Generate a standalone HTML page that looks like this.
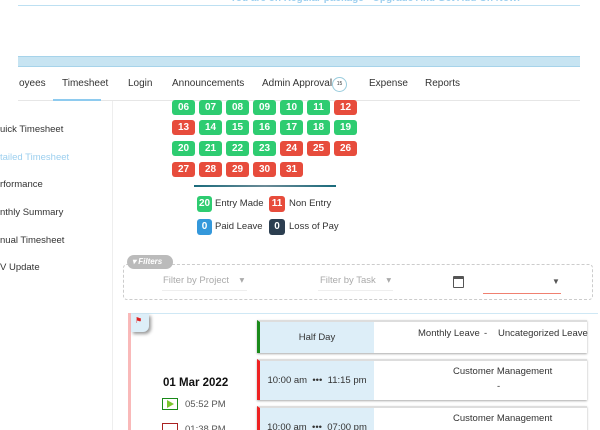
<!DOCTYPE html>
<html><head><style>
*{margin:0;padding:0;box-sizing:border-box}
html,body{width:600px;height:430px;overflow:hidden}
body{background:#fff;font-family:"Liberation Sans",sans-serif;position:relative;color:#333}
.a{position:absolute;white-space:nowrap}
.c{position:absolute;width:23px;height:15px;border-radius:3px;color:#fff;font-size:10px;font-weight:bold;text-align:center;line-height:15px}
.g{background:#2ecc71}.r{background:#e74c3c}
.tab{position:absolute;top:78px;font-size:10px;color:#333;white-space:nowrap}
.side{position:absolute;left:0;font-size:9.5px;color:#333}
.row{position:absolute;left:257px;width:330px;background:#fff;box-shadow:0 1px 2px #aaa;border-top:2px solid #ddd}
.row .bl{position:absolute;left:0;top:0;bottom:0;width:114px;background:#ddeef8;font-size:9.5px;text-align:center}
.t{position:absolute;font-size:9.5px;color:#333;white-space:nowrap}
</style></head><body>
<div class="a" style="left:230px;top:-7px;font-size:10px;font-weight:bold;color:#9ccfef">You are on Regular package - Upgrade And Get Add On Now!</div>
<div class="a" style="left:18px;top:5px;width:562px;height:1px;background:#bde0f2"></div>
<div class="a" style="left:18px;top:56px;width:562px;height:11px;background:#c7e4f2;border-top:1px solid #a6d3ea;border-bottom:1px solid #a6d3ea"></div>
<div class="tab" style="left:19px">oyees</div>
<div class="tab" style="left:62px">Timesheet</div>
<div class="tab" style="left:128px">Login</div>
<div class="tab" style="left:172px">Announcements</div>
<div class="tab" style="left:262px">Admin Approval</div>
<div class="a" style="left:332px;top:77px;width:15px;height:15px;border:1px solid #9cd;border-radius:50%;font-size:5px;text-align:center;line-height:13px">15</div>
<div class="tab" style="left:369px">Expense</div>
<div class="tab" style="left:425px">Reports</div>
<div class="a" style="left:18px;top:100px;width:562px;height:1px;background:#e6e6e6"></div>
<div class="a" style="left:53px;top:99px;width:48px;height:2px;background:#8ecbef"></div>
<div class="a" style="left:112px;top:101px;width:1px;height:329px;background:#eee"></div>
<div class="side" style="top:124px">uick Timesheet</div>
<div class="side" style="top:152px;color:#9ccfef">tailed Timesheet</div>
<div class="side" style="top:179px">rformance</div>
<div class="side" style="top:207px">nthly Summary</div>
<div class="side" style="top:235px">nual Timesheet</div>
<div class="side" style="top:262px">V Update</div>

<div class="c g" style="left:172px;top:100px">06</div><div class="c g" style="left:199px;top:100px">07</div><div class="c g" style="left:226px;top:100px">08</div><div class="c g" style="left:253px;top:100px">09</div><div class="c g" style="left:280px;top:100px">10</div><div class="c g" style="left:307px;top:100px">11</div><div class="c r" style="left:334px;top:100px">12</div>
<div class="c r" style="left:172px;top:120px">13</div><div class="c g" style="left:199px;top:120px">14</div><div class="c g" style="left:226px;top:120px">15</div><div class="c g" style="left:253px;top:120px">16</div><div class="c g" style="left:280px;top:120px">17</div><div class="c g" style="left:307px;top:120px">18</div><div class="c g" style="left:334px;top:120px">19</div>
<div class="c g" style="left:172px;top:141px">20</div><div class="c g" style="left:199px;top:141px">21</div><div class="c g" style="left:226px;top:141px">22</div><div class="c g" style="left:253px;top:141px">23</div><div class="c r" style="left:280px;top:141px">24</div><div class="c r" style="left:307px;top:141px">25</div><div class="c r" style="left:334px;top:141px">26</div>
<div class="c r" style="left:172px;top:162px">27</div><div class="c r" style="left:199px;top:162px">28</div><div class="c r" style="left:226px;top:162px">29</div><div class="c r" style="left:253px;top:162px">30</div><div class="c r" style="left:280px;top:162px">31</div>
<div class="a" style="left:194px;top:185px;width:142px;height:2px;background:linear-gradient(90deg,#1a6b7c,#6a8a96,#1a6b7c)"></div>
<div class="c g" style="left:197px;top:196px;width:15px;height:16px;line-height:16px">20</div><div class="a" style="left:215px;top:198px;font-size:9.5px">Entry Made</div>
<div class="c r" style="left:269px;top:196px;width:16px;height:16px;line-height:16px">11</div><div class="a" style="left:289px;top:198px;font-size:9.5px">Non Entry</div>
<div class="c" style="left:197px;top:219px;width:15px;height:16px;line-height:16px;background:#3498db">0</div><div class="a" style="left:215px;top:221px;font-size:9.5px">Paid Leave</div>
<div class="c" style="left:269px;top:219px;width:16px;height:16px;line-height:16px;background:#2c3e50">0</div><div class="a" style="left:289px;top:221px;font-size:9.5px">Loss of Pay</div>

<div class="a" style="left:123px;top:264px;width:470px;height:36px;border:1px dashed #ccc;border-radius:4px"></div>
<div class="a" style="left:127px;top:255px;width:46px;height:14px;background:#bbb;border-radius:7px;color:#fff;font-size:8px;font-style:italic;font-weight:bold;line-height:14px;padding-left:5px">▾ Filters</div>
<div class="a" style="left:163px;top:275px;font-size:9.5px;color:#aaa">Filter by Project &nbsp;&nbsp; ▾</div>
<div class="a" style="left:162px;top:290px;width:85px;height:1px;background:#eee"></div>
<div class="a" style="left:320px;top:275px;font-size:9.5px;color:#aaa">Filter by Task &nbsp;&nbsp; ▾</div>
<div class="a" style="left:318px;top:290px;width:75px;height:1px;background:#eee"></div>
<div class="a" style="left:453px;top:276px;width:11px;height:12px;border:1.5px solid #555;border-radius:1px;border-top-width:3px"></div>
<div class="a" style="left:552px;top:277px;font-size:8px;color:#555">▼</div>
<div class="a" style="left:483px;top:293px;width:78px;height:1px;background:#f08070"></div>

<div class="a" style="left:128px;top:313px;width:470px;height:1px;background:#cfe8f5"></div>
<div class="a" style="left:128px;top:313px;width:3px;height:117px;background:#f9b9b9"></div>
<div class="a" style="left:131px;top:314px;width:18px;height:18px;background:#ddeef8;border-radius:0 0 6px 0;box-shadow:2px 2px 3px #999"></div>
<div class="a" style="left:135px;top:316px;color:#d22;font-size:8px">⚑</div>
<div class="a" style="left:163px;top:377px;font-size:11.5px;font-weight:bold;color:#111">01 Mar 2022</div>
<div class="a" style="left:162px;top:398px;width:16px;height:12px;border:1.5px solid #1a8a1a;background:#fff"></div>
<div class="a" style="left:167px;top:400px;width:0;height:0;border-left:7px solid #7bc62d;border-top:4px solid transparent;border-bottom:4px solid transparent"></div>
<div class="a" style="left:185px;top:399px;font-size:9.5px;color:#555">05:52 PM</div>
<div class="a" style="left:162px;top:423px;width:16px;height:12px;border:1.5px solid #a22"></div>
<div class="a" style="left:185px;top:424px;font-size:9.5px;color:#555">01:38 PM</div>

<div class="row" style="top:320px;height:33px;border-left:3px solid #1a8a1a"><div class="bl" style="line-height:31px">Half Day</div></div>
<div class="t" style="left:418px;top:328px">Monthly Leave</div>
<div class="t" style="left:484px;top:328px">-</div>
<div class="t" style="left:498px;top:328px">Uncategorized Leave</div>
<div class="row" style="top:359px;height:41px;border-left:3px solid #e22"><div class="bl" style="line-height:40px">10:00 am &nbsp;••• &nbsp;11:15 pm</div></div>
<div class="t" style="left:453px;top:366px">Customer Management</div>
<div class="t" style="left:497px;top:381px">-</div>
<div class="row" style="top:406px;height:41px;border-left:3px solid #e22"><div class="bl" style="padding-top:14px">10:00 am &nbsp;••• &nbsp;07:00 pm</div></div>
<div class="t" style="left:453px;top:413px">Customer Management</div>
</body></html>
